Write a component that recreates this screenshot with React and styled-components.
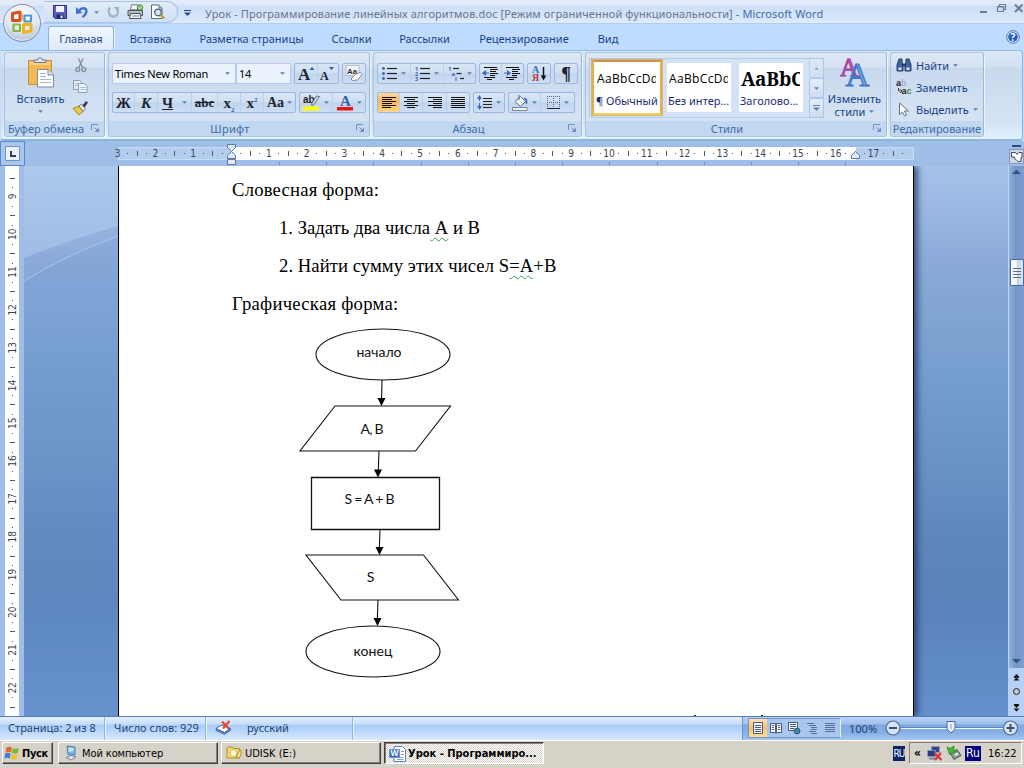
import React from 'react';
import styled, { createGlobalStyle, css } from 'styled-components';

const GlobalStyle = createGlobalStyle`
  * { box-sizing: border-box; }
  body {
    margin: 0;
    width: 1024px;
    height: 768px;
    overflow: hidden;
    background: #bfdbff;
    font-family: 'Noto Sans', 'Open Sans', sans-serif;
    font-size: 11px;
    color: #15428b;
  }
  svg { display: block; flex: none; }
`;

const Window = styled.div`
  position: relative;
  width: 1024px;
  height: 768px;
  display: flex;
  flex-direction: column;
  overflow: hidden;
  white-space: nowrap;
`;

/* ---------- title bar and tabs ---------- */

const TitleBar = styled.header`
  height: 24px;
  flex: none;
  display: flex;
  align-items: center;
  padding: 3px 1px 0 44px;
  background: linear-gradient(#e4ecf8 0, #dfe9f7 5px, #cddff6 6px, #d9e8fb 20px, #e2eefd 100%);
  border-bottom: 1px solid #b0cdf2;
`;

const QuickAccess = styled.div`
  width: 134px;
  height: 22px;
  margin-top: -2px;
  display: flex;
  align-items: center;
  padding-left: 9px;
  border: 1px solid #a9c4ea;
  border-left: none;
  border-radius: 0 12px 12px 0;
  background: linear-gradient(#e3edfa, #cfdff4);
`;

const QuickItem = styled.span`
  width: ${(p) => p.$w}px;
  padding-left: ${(p) => p.$pl || 0}px;
  display: flex;
  align-items: center;
`;

const TitleText = styled.div`
  flex: 1;
  font-size: 11px;
  letter-spacing: 0.11px;
  color: #69758c;
  span { color: #3e6aaa; }
`;

const Caption = styled.div`
  display: flex;
  align-self: flex-start;
`;

const TabBar = styled.nav`
  height: 26px;
  flex: none;
  display: flex;
  align-items: flex-end;
  padding-left: 48px;
  background: #bfdbff;
`;

const Tab = styled.div`
  width: ${(p) => p.$w}px;
  height: 24px;
  display: flex;
  align-items: center;
  justify-content: center;
  ${(p) => p.$active && css`
    background: linear-gradient(#f2f7fe, #dfeafa);
    border: 1px solid #8db2e3;
    border-bottom: none;
    border-radius: 3px 3px 0 0;
    box-shadow: 1px 0 0 #e9f2fe;
  `}
`;

const HelpSlot = styled.div`
  margin-left: auto;
  align-self: center;
  padding-right: 4px;
`;

const Orb = styled.div`
  position: absolute;
  left: 2px;
  top: 3px;
`;

/* ---------- ribbon ---------- */

const Ribbon = styled.section`
  height: 91px;
  flex: none;
  display: flex;
  gap: 3px;
  padding: 1px 4px 2px 3px;
  margin-right: 1px;
  background: linear-gradient(#dbe7f5 0, #d2e0f2 16px, #c8d9ed 17px, #d5e4f5 72px, #e2f1ff 100%);
  border: 1px solid #8db2e3;
  border-left-color: #c4dcfb;
  border-bottom: 2px solid #8db8de;
  border-radius: 0 4px 4px 4px;
  border-top-color: #94b8e6;
`;

const GroupBox = styled.div`
  width: ${(p) => p.$w}px;
  height: 85px;
  flex: none;
  display: flex;
  flex-direction: column;
  border: 1px solid #a9c5e3;
  border-right-color: #9ab9dc;
  border-radius: 3px;
  background: linear-gradient(#dee8f5 0, #d5e2f2 14px, #c9d9ed 15px, #d8e6f6 100%);
  box-shadow: 1px 1px 0 #ecf4fd;
`;

const GroupBody = styled.div`
  height: 68px;
  display: flex;
  flex-direction: ${(p) => (p.$row ? 'row' : 'column')};
  padding: ${(p) => p.$pad || '10px 3px 0'};
  gap: ${(p) => (p.$gap === undefined ? 8 : p.$gap)}px;
`;

const GroupLabel = styled.div`
  flex: 1;
  display: flex;
  align-items: center;
  justify-content: center;
  position: relative;
  padding-right: ${(p) => p.$pr || 0}px;
  background: #c1d8f0;
  border-radius: 0 0 3px 3px;
  color: #3e6aaa;
  letter-spacing: ${(p) => p.$ls || 0}px;
`;

const LauncherSlot = styled.div`
  position: absolute;
  right: 4px;
  top: 3px;
`;

const Row = styled.div`
  height: 21px;
  display: flex;
  gap: 3px;
`;

const ComboPair = styled.div`
  display: flex;
`;

const Combo = styled.div`
  width: ${(p) => p.$w}px;
  height: 21px;
  display: flex;
  align-items: center;
  justify-content: space-between;
  padding: 0 5px 0 2px;
  border: 1px solid #b4cae6;
  background: #eaf2fb;
  color: #000;
  letter-spacing: -0.2px;
`;

const ButtonGroup = styled.div`
  display: flex;
  height: 21px;
  border: 1px solid #9bb8dd;
  border-radius: 2px;
  background: linear-gradient(#d8e5f5 0, #cfdff2 9px, #c0d4ee 10px, #cddef3 100%);
`;

const Tool = styled.div`
  width: ${(p) => p.$w}px;
  height: 19px;
  display: flex;
  align-items: center;
  justify-content: center;
  gap: 3px;
  color: #1c2430;
  border-right: 1px solid #b9cfeb;
  &:last-child { border-right: none; }
  ${(p) => p.$on && css`
    background: linear-gradient(#fbd9a5, #fbb75b 45%, #fdd787);
  `}
`;

const Glyph = styled.span`
  font-family: 'Liberation Serif', serif;
  font-size: ${(p) => p.$size || 16}px;
  font-weight: bold;
  font-style: ${(p) => (p.$italic ? 'italic' : 'normal')};
  text-decoration: ${(p) => p.$line || 'none'};
  line-height: 18px;
  sup, sub { font-size: 7px; color: #2c56b0; line-height: 0; }
`;

const PasteButton = styled.div`
  width: 67px;
  display: flex;
  flex-direction: column;
  align-items: center;
  padding-top: 1px;
  padding-left: 4px;
  span { line-height: 15px; margin: 3px 0 4px; }
`;

const SmallStack = styled.div`
  display: flex;
  flex-direction: column;
  align-items: center;
  gap: 7px;
  padding-top: 2px;
`;

const Gallery = styled.div`
  display: flex;
  flex: none;
  width: 235px;
  height: 60px;
  border: 1px solid #b3cbe9;
  background: #d3e2f4;
`;

const StyleTile = styled.div`
  flex: none;
  width: ${(p) => (p.$on ? 72 : 64)}px;
  height: ${(p) => (p.$on ? 57 : 49)}px;
  margin: ${(p) => (p.$on ? '0 4px 0 1px' : '4px 8px 0 0')};
  background: #fff;
  border: ${(p) => (p.$on ? '3px solid #e8b043' : 'none')};
  border-top-color: #cf9247;
  border-bottom-color: #f3cf55;
  outline: ${(p) => (p.$on ? '1px solid #d7b27d' : 'none')};
  outline-offset: -1px;
  padding: ${(p) => (p.$on ? '8px 2px 0' : '7px 1px 0')};
  &:nth-child(3) { margin-right: 0; }
`;

const Sample = styled.div`
  width: 60px;
  height: 20px;
  overflow: hidden;
  line-height: 18px;
  font-family: ${(p) => (p.$heading ? "'Noto Serif', 'DejaVu Serif', serif" : "'Open Sans', sans-serif")};
  font-size: ${(p) => (p.$heading ? 19 : 12)}px;
  font-weight: ${(p) => (p.$heading ? 'bold' : 'normal')};
  letter-spacing: ${(p) => (p.$heading ? -0.2 : 0.35)}px;
  color: #000;
  padding-left: 1px;
`;

const TileName = styled.div`
  margin-top: 4px;
  line-height: 14px;
  color: #1b2c70;
`;

const GalleryScroll = styled.div`
  width: 15px;
  flex: none;
  margin: -1px -1px -1px auto;
  display: flex;
  flex-direction: column;
`;

const GalleryArrow = styled.div`
  flex: 1;
  display: flex;
  align-items: center;
  justify-content: center;
  border: 1px solid #aac4e4;
  border-radius: 2px;
  background: linear-gradient(#e3edf8, #cddef2);
  opacity: ${(p) => (p.$dim ? 0.6 : 1)};
`;

const ChangeStyles = styled.div`
  width: 61px;
  display: flex;
  flex-direction: column;
  align-items: center;
  line-height: 13px;
  svg + span { margin-top: 5px; }
  span { display: flex; align-items: center; gap: 4px; letter-spacing: 0.05px; }
`;

const EditLine = styled.div`
  height: 22px;
  display: flex;
  align-items: center;
  gap: 4px;
`;

/* ---------- workspace ---------- */

const RulerRow = styled.div`
  height: 25px;
  flex: none;
  display: flex;
  align-items: flex-start;
  background: #9ebde7;
`;

const TabSelector = styled.div`
  width: 25px;
  height: 25px;
  margin-right: 92px;
  display: flex;
  align-items: center;
  justify-content: center;
  border: 1px solid #5b87c9;
  background: #a9c6ec;
`;

const RulerToggle = styled.div`
  width: 16px;
  margin-left: auto;
  display: flex;
  flex-direction: column;
  align-items: center;
  gap: 2px;
  padding-top: 4px;
`;

const RulerSvg = styled.svg`
  overflow: visible;
  font-family: 'DejaVu Sans Condensed', 'DejaVu Sans', sans-serif;
  font-size: 10px;
  fill: #3a4454;
`;

const Workspace = styled.main`
  height: 550px;
  flex: none;
  display: flex;
`;

const SideRuler = styled.div`
  width: 24px;
  overflow: hidden;
  background: #a0bee6;
`;

const Canvas = styled.div`
  flex: 1;
  display: flex;
  position: relative;
  background: linear-gradient(#a5c2e9 0, #8aa9d9 100px, #779fcf 200px, #5f86bb 380px, #5a83bb 440px, #6590cd 550px);
`;

const Swoosh = styled.svg`
  width: 94px;
`;

const Page = styled.article`
  width: 796px;
  height: 550px;
  position: relative;
  background: #fff;
  border-left: 1px solid #000;
  border-right: 1px solid #000;
  box-shadow: 4px 0 6px rgba(30, 55, 100, 0.75);
  clip-path: inset(0 -14px 0 0);
  padding: 5px 0 0 113px;
  color: #000;
  overflow: hidden;
`;

/* tops of the letters that the page edge cuts off */
const Speck = styled.i`
  position: absolute;
  left: ${(p) => p.$x}px;
  bottom: 0;
  width: 2px;
  height: 1px;
  background: #222;
`;

const Line = styled.p`
  margin: 0;
  height: 38px;
  line-height: 38px;
  padding-left: ${(p) => (p.$indent ? 47 : 0)}px;
  font-family: 'Liberation Serif', serif;
  font-size: 18.67px;
  letter-spacing: ${(p) => p.$ls || 0}px;
`;

const Wavy = styled.span`
  text-decoration: underline wavy #3d9a4b 1px;
  text-underline-offset: 3px;
`;

const Flowchart = styled.svg`
  margin: -5px 0 0 60px;
  font-family: Lato, 'Open Sans', sans-serif;
  font-size: 14px;
`;

const ScrollBar = styled.aside`
  width: 16px;
  display: flex;
  flex-direction: column;
  align-items: center;
  border-left: 1px solid #b9d3f5;
  background: linear-gradient(90deg, #95b1dc, #7597c8 40%, #7c9dcd);
`;

const ScrollThumb = styled.div`
  width: 14px;
  height: 27px;
  margin: 83px 0 371px;
  display: flex;
  flex-direction: column;
  align-items: center;
  justify-content: center;
  gap: 2px;
  border: 1px solid #4b6a99;
  border-radius: 1px;
  background: linear-gradient(90deg, #f3f8fd 45%, #c5d4e5 50%, #dbe6f1);
  i { width: 8px; height: 1px; background: #5d6d83; }
`;

const BrowseButtons = styled.div`
  width: 15px;
  flex: 1;
  display: flex;
  justify-content: center;
  background: #b7d0f5;
`;

/* ---------- status bar ---------- */

const StatusBar = styled.footer`
  height: 24px;
  flex: none;
  display: flex;
  align-items: stretch;
  border-top: 1px solid #567db1;
  background: linear-gradient(#e3effe 0, #c9defb 7px, #a9ccf8 8px, #bcd8fb 15px, #d9e9fd 100%);
  color: #1f3e77;
`;

const StatusCell = styled.div`
  width: ${(p) => p.$w}px;
  padding: 0 0 2px ${(p) => p.$pl || 9}px;
  display: flex;
  align-items: center;
  gap: 15px;
  border-right: 1px solid #93b4dd;
  box-shadow: 1px 0 0 #e8f2ff;
`;

const StatusRight = styled.div`
  width: 282px;
  margin-left: auto;
  padding: 0 0 1px 5px;
  display: flex;
  align-items: center;
  border-left: 1px solid #6f94c6;
  background: linear-gradient(#b9d3f5 0, #9fc1ee 7px, #7fa9e0 8px, #86b0e6 16px, #a5c8f2 100%);
`;

const ViewButtons = styled.div`
  display: flex;
  width: 93px;
  height: 20px;
  border: 1px solid #7296c9;
  border-right-color: #e5f0ff;
  background: #a9c7ee;
`;

const ViewButton = styled.div`
  width: 18px;
  height: 18px;
  display: flex;
  align-items: center;
  justify-content: center;
  background: ${(p) => (p.$on ? 'linear-gradient(#fde3b5, #fcbf62 50%, #fde093)' : 'transparent')};
`;

const ZoomText = styled.span`
  width: 29px;
  margin: 0 6px 0 8px;
`;

/* ---------- XP taskbar ---------- */

const TaskBar = styled.div`
  height: 28px;
  flex: none;
  display: flex;
  align-items: flex-start;
  padding: 1px 2px 0;
  border-top: 1px solid #fff;
  background: #d6d2c8;
  color: #000;
  font-family: 'DejaVu Sans Condensed', 'DejaVu Sans', sans-serif;
  font-size: 11px;
`;

const raised = css`
  border: 1px solid;
  border-color: #fff #404040 #404040 #fff;
  box-shadow: inset -1px -1px 0 #858179;
`;

const StartButton = styled.div`
  ${raised}
  width: 51px;
  height: 22px;
  margin-right: 5px;
  display: flex;
  align-items: center;
  gap: 1px;
  padding-left: 1px;
  font-weight: bold;
  letter-spacing: -0.4px;
`;

const TaskButton = styled.div`
  ${raised}
  width: 160px;
  height: 22px;
  margin-right: 3px;
  display: flex;
  align-items: center;
  gap: 3px;
  padding-left: 4px;
  letter-spacing: ${(p) => p.$ls || 0}px;
  ${(p) => p.$active && css`
    border-color: #404040 #fff #fff #404040;
    box-shadow: inset 1px 1px 0 #858179;
    background: repeating-conic-gradient(#fff 0 25%, #d6d2c8 0 50%) 0 0 / 2px 2px;
    font-weight: bold;
    padding: 1px 0 0 4px;
    gap: 2px;
  `}
`;

const LangBox = styled.div`
  width: ${(p) => p.$w}px;
  height: 15px;
  line-height: 15px;
  text-align: center;
  letter-spacing: ${(p) => p.$ls || 0}px;
  overflow: hidden;
  background: ${(p) => p.$bg};
  color: #fff;
  font-size: ${(p) => p.$size || 11}px;
`;

const TrayArea = styled.div`
  margin-left: auto;
  height: 22px;
  display: flex;
  align-items: center;
  gap: 4px;
`;

const Tray = styled.div`
  width: 113px;
  height: 22px;
  display: flex;
  align-items: center;
  gap: 3px;
  padding-left: 4px;
  border: 1px solid;
  border-color: #858179 #fff #fff #858179;
  time { margin-left: 4px; }
  b { width: 9px; font-size: 12px; }
`;

/* ---------- icons ---------- */

const Arrow = ({ w = 5, color = '#5f7fae', up }) => (
  <svg width={w} height="3" viewBox="0 0 6 3">
    <path d={up ? 'M0 3h6L3 0z' : 'M0 0h6L3 3z'} fill={color} />
  </svg>
);

/* arrow with a bar over it: "more" buttons */
const BarArrow = ({ color = '#5f7fae' }) => (
  <svg width="7" height="6" viewBox="0 0 7 6">
    <path d="M0 .5h7" stroke={color} />
    <path d="M0 2.500h7L3.500 6z" fill={color} />
  </svg>
);

const OfficeOrb = () => (
  <svg width="40" height="40" viewBox="0 0 40 40">
    <defs>
      <radialGradient id="orb" cx="50%" cy="30%" r="70%">
        <stop offset="0" stopColor="#fff" />
        <stop offset="0.6" stopColor="#e1e8f2" />
        <stop offset="1" stopColor="#aebfd6" />
      </radialGradient>
    </defs>
    <circle cx="20" cy="20" r="18.500" fill="url(#orb)" stroke="#7c91b0" />
    <circle cx="20" cy="20" r="17.200" fill="none" stroke="#f7faff" strokeOpacity=".8" />
    <g fill="none" strokeLinejoin="round">
      <path d="M10.500 10.500l7.500-1.500v8.500h-7.500z" stroke="#d4501c" strokeWidth="3" />
      <path d="M22.500 12.500h6.500v6h-6.500z" stroke="#4a9bd8" strokeWidth="2.200" />
      <path d="M11.500 21.500h6.500v6.500h-6.500z" stroke="#85b643" strokeWidth="2.200" />
      <path d="M21.500 21.500h7.500v6.500l-7.500 1.500z" stroke="#efb31d" strokeWidth="3" />
    </g>
    <path d="M18 8.500l2.500 2.500v6" stroke="#f09a56" strokeWidth="1" fill="none" />
  </svg>
);

const SaveIcon = () => (
  <svg width="14" height="14" viewBox="0 0 14 14">
    <path d="M.5.5h13v13H2l-1.500-1.500z" fill="#5a5fc4" stroke="#2d2f8c" />
    <path d="M3 1h8v6H3z" fill="#eef3fc" />
    <path d="M3.500 9.500h7V13h-7z" fill="#27285f" />
    <path d="M7.500 10.500h2V13h-2z" fill="#f1f4ff" />
  </svg>
);

const UndoIcon = () => (
  <svg width="14" height="14" viewBox="0 0 14 14">
    <path d="M4 5.500C6.500 2.500 10.500 2.500 11.300 5.200c.6 2.300-1 4.600-3.800 7" fill="none" stroke="#3c6fd0" strokeWidth="2.400" />
    <path d="M1 2v7l6.500-1z" fill="#3c6fd0" />
  </svg>
);

const RedoIcon = () => (
  <svg width="13" height="14" viewBox="0 0 13 14">
    <path d="M3 2.500C.5 6 2 11.500 6.500 11.500c4 0 5.500-4.500 3.500-7.500" fill="none" stroke="#a4b3cc" strokeWidth="2.400" />
    <path d="M6.500 2h5.500v5.500z" fill="#a4b3cc" />
  </svg>
);

const PrintIcon = () => (
  <svg width="17" height="16" viewBox="0 0 17 16">
    <path d="M4.500.8h6l1 5h-8z" fill="#fff" stroke="#6d7788" />
    <path d="M1 6.500h14.500v5H1z" fill="#b6bdc8" stroke="#4b5362" />
    <path d="M3.500 9.500h9.500l1 5H2.500z" fill="#f7f7fa" stroke="#4b5362" />
    <path d="M5 12h7" stroke="#777" />
    <circle cx="13" cy="3.500" r="2.800" fill="#7cc05c" stroke="#3c7a25" strokeWidth=".7" />
    <path d="M11.500 3.500l1.200 1.200 2-2.200" stroke="#fff" fill="none" />
  </svg>
);

const PreviewIcon = () => (
  <svg width="16" height="16" viewBox="0 0 16 16">
    <path d="M1.500 1h7.500l3 3v10.500H1.500z" fill="#fff" stroke="#5b687d" />
    <path d="M9 1v3h3" fill="#dbe4f2" stroke="#5b687d" />
    <circle cx="8" cy="8.500" r="3.300" fill="#cfe4f6" stroke="#4d5a6e" strokeWidth="1.200" />
    <path d="M10.500 11l4 3.500" stroke="#c49a32" strokeWidth="2.200" />
  </svg>
);

const CaptionIcons = () => (
  <svg width="44" height="12" viewBox="0 0 44 12" stroke="#6b7f9d" fill="none">
    <path d="M1 9h7" strokeWidth="2" />
    <path d="M20.500 3V1.500h6v5H25M18.500 3.500h6v5h-6zM18.500 4h6" strokeWidth="1.200" />
    <path d="M36 1.500l7.500 7.500M43.500 1.500L36 9" strokeWidth="2" />
  </svg>
);

const HelpIcon = () => (
  <svg width="14" height="14" viewBox="0 0 14 14">
    <circle cx="7" cy="7" r="6.300" fill="#e9f2ff" stroke="#4570b5" />
    <circle cx="7" cy="7" r="4.800" fill="#2261c9" />
    <text x="7" y="10.600" textAnchor="middle" fontSize="10" fontWeight="bold" fill="#fff">?</text>
  </svg>
);

const PasteIcon = () => (
  <svg width="28" height="31" viewBox="0 0 28 31">
    <path d="M1.500 3.500h23v24h-23z" fill="#f3b957" stroke="#cb8d2e" />
    <path d="M3 5h20v3H3z" fill="#f9cf85" />
    <path d="M7 5.500V3h3.500c0-3 5-3 5 0H19v2.500z" fill="#dfe3e8" stroke="#6c7686" />
    <path d="M10.500 12.500h10.500l5.500 5.500v12H10.500z" fill="#fff" stroke="#7a8aa5" />
    <path d="M21 12.500V18h5.500" fill="#dce6f4" stroke="#7a8aa5" />
    <path d="M13 16.500h6M13 19.500h6M13 22.500h11M13 25.500h11" stroke="#a8b6cc" />
  </svg>
);

const CutIcon = () => (
  <svg width="12" height="15" viewBox="0 0 12 15" fill="none" stroke="#8693a8" strokeWidth="1.500">
    <path d="M3.500.5l4 9M8 .5l-4 9" />
    <circle cx="2.800" cy="11.500" r="1.900" />
    <circle cx="8.800" cy="11.500" r="1.900" />
  </svg>
);

const CopyIcon = () => (
  <svg width="15" height="13" viewBox="0 0 15 13">
    <path d="M.5.5h6l2 2v7h-8z" fill="#e7eef8" stroke="#8d9cb5" />
    <path d="M5.500 3.500h6l2.500 2.500v6.500H5.500z" fill="#eef4fc" stroke="#8d9cb5" />
    <path d="M2 3.500h4M2 5.500h3M7.500 7.500h5M7.500 9.500h5" stroke="#a9b6ca" />
  </svg>
);

const BrushIcon = () => (
  <svg width="17" height="16" viewBox="0 0 17 16">
    <path d="M1 8.500l6-2.500 4 5.500-4 3.500z" fill="#e9c94a" stroke="#ac8a1e" />
    <path d="M7 6l2.500-2 4 5-2.500 2.500z" fill="#e6e6e6" stroke="#666" strokeWidth=".8" />
    <path d="M10.500 5.500L14 1l2 1.500-3.500 5z" fill="#3a2f5e" />
  </svg>
);

const Launcher = () => (
  <LauncherSlot>
    <svg width="9" height="9" viewBox="0 0 9 9" fill="none" stroke="#6d8fbf">
      <path d="M.5 6V.5H7M3.500 3.500l3 3" />
      <path d="M8 3.500V8H3.500z" fill="#6d8fbf" stroke="none" />
    </svg>
  </LauncherSlot>
);

const GrowFont = ({ shrink }) => (
  <svg width="17" height="17" viewBox="0 0 17 17">
    <text x="0" y="15" fontFamily="Liberation Serif" fontWeight="bold" fontSize={shrink ? 12 : 17} fill="#1c2430">A</text>
    <path d={shrink ? 'M9 2h5l-2.500 3z' : 'M11.500 5h5L14 2z'} fill="#2d5aa8" />
  </svg>
);

const ClearFormat = () => (
  <svg width="19" height="17" viewBox="0 0 19 17">
    <rect x="1" y=".5" width="13" height="10" fill="#f3f6fb" stroke="#93a4bd" strokeWidth=".6" />
    <text x="2" y="8.500" fontFamily="Liberation Sans" fontWeight="bold" fontSize="8" fill="#333">Aa</text>
    <path d="M6 14l4.500-5 5-1.500 1.500 2-4.500 5.500-5 .5z" fill="#fff" stroke="#77869d" />
  </svg>
);

const Highlighter = () => (
  <svg width="18" height="17" viewBox="0 0 18 17">
    <text x="0" y="9" fontFamily="Liberation Sans" fontSize="10" fontWeight="bold" fill="#222">ab</text>
    <path d="M8.500 10l5-8 3 .5L12 9.500l-3 2z" fill="#ccd5e1" stroke="#59677d" strokeWidth=".9" />
    <path d="M0 12.500h16v4H0z" fill="#ffff00" />
  </svg>
);

const FontColor = () => (
  <svg width="17" height="17" viewBox="0 0 17 17">
    <text x="3" y="11.500" fontFamily="Liberation Serif" fontSize="15" fontWeight="bold" fill="#3060a6">A</text>
    <path d="M0 13h16v3.500H0z" fill="#ee1111" />
  </svg>
);

const ListIcon = ({ kind }) => (
  <svg width="16" height="15" viewBox="0 0 16 15">
    {[2.5, 7.5, 12.5].map((y, i) => (
      <g key={y}>
        {kind === 'bullet' && <circle cx="1.500" cy={y} r="1.400" fill="#3c62b0" />}
        {kind === 'number' && <text x="0" y={y + 2} fontSize="5.500" fontWeight="bold" fill="#3c62b0">{i + 1}</text>}
        {kind === 'level' && <text x={i * 3.5} y={y + 2} fontSize="6" fontWeight="bold" fill="#3c62b0">{'1ai'[i]}</text>}
        <path
          d={kind === 'level' ? `M${5 + i * 3.5} ${y}H${11 + i * 2.5}` : `M5 ${y}H15`}
          stroke="#222"
          strokeWidth="1.200"
        />
      </g>
    ))}
  </svg>
);

const IndentIcon = ({ right }) => (
  <svg width="17" height="15" viewBox="0 0 17 15">
    <path d="M2 1.500h13M8 3.500h8M8 5.500h6M8 7.500h8M8 9.500h5M2 11.500h11M5 13.500h5" stroke="#111" strokeWidth="1.100" />
    <path d={right ? 'M0 6.500h3V4l4 3-4 3V7.500H0z' : 'M7 6.500H4V4L0 7l4 3V7.500h3z'} fill="#3867b8" />
  </svg>
);

const SortIcon = () => (
  <svg width="15" height="17" viewBox="0 0 15 17">
    <text x="0" y="8" fontFamily="Liberation Serif" fontSize="10" fontWeight="bold" fill="#3867b8">А</text>
    <text x="0" y="16" fontFamily="Liberation Serif" fontSize="10" fontWeight="bold" fill="#c23b3b">Я</text>
    <path d="M11.500 2v10" stroke="#111" strokeWidth="1.500" />
    <path d="M8.800 10.500h5.400l-2.700 5z" fill="#111" />
  </svg>
);

const alignPaths = {
  left: 'M0 1.500h14M0 3.500h10M0 5.500h14M0 7.500h10M0 9.500h14M0 11.500h9',
  center: 'M0 1.500h14M3 3.500h8M0 5.500h14M3 7.500h8M0 9.500h14M3 11.500h8',
  right: 'M0 1.500h14M5 3.500h9M0 5.500h14M5 7.500h9M0 9.500h14M5 11.500h9',
  full: 'M0 1.500h14M0 3.500h14M0 5.500h14M0 7.500h14M0 9.500h14M0 11.500h14',
};

const AlignIcon = ({ kind }) => (
  <svg width="14" height="13" viewBox="0 0 14 13">
    <path d={alignPaths[kind]} stroke="#111" strokeWidth="1" />
  </svg>
);

const SpacingIcon = () => (
  <svg width="16" height="17" viewBox="0 0 16 17">
    <path d="M6 4.500h9M6 7.500h9M6 10.500h9M6 13.500h9" stroke="#222" />
    <path d="M2.500 4v9" stroke="#3867b8" strokeDasharray="3 2" />
    <path d="M0 5h5L2.500 1zM0 12h5l-2.500 4z" fill="#3867b8" />
  </svg>
);

const BucketIcon = () => (
  <svg width="17" height="17" viewBox="0 0 17 17">
    <path d="M3 7.500l5.500-5 5 5-5 5z" fill="#f4f7fb" stroke="#55647c" />
    <path d="M7 1v5" stroke="#55647c" />
    <path d="M11.500 3.500c4 0 4.500 3 3.500 7-1.500-1-2.200-2.500-1.500-4z" fill="#3c70c4" />
    <path d="M.5 13.500h14.500v3H.5z" fill="#f3f3f3" stroke="#77869d" />
  </svg>
);

const BordersIcon = () => (
  <svg width="15" height="15" viewBox="0 0 15 15">
    <path d="M1 1.500h13M1.500 1v12M7.500 1v12M13.500 1v12M1 7.500h13" stroke="#55647c" strokeDasharray="1 1" fill="none" />
    <path d="M1 13.500h13" stroke="#222" />
  </svg>
);

const StylesIcon = () => (
  <svg width="30" height="29" viewBox="0 0 30 29" fontFamily="Liberation Serif">
    <text x="0" y="17.500" fontSize="25" fill="#c25abb" stroke="#a3409c" strokeWidth="1">A</text>
    <text x="5.500" y="27.500" fontSize="33" fill="#6f9fe2" stroke="#3e72c4" strokeWidth="1.100">A</text>
  </svg>
);

const FindIcon = () => (
  <svg width="16" height="14" viewBox="0 0 16 14">
    <path d="M3 1h3v3l1 3v6H1V7zM10 1h3l2 6v6H9V7l1-3z" fill="#41639f" stroke="#25406f" />
    <path d="M6 5.500h4v3H6z" fill="#25406f" />
    <path d="M2.500 9.500h3v2.500h-3zM10.500 9.500h3v2.500h-3z" fill="#dce8f8" />
  </svg>
);

const ReplaceIcon = () => (
  <svg width="16" height="16" viewBox="0 0 16 16" fontFamily="Liberation Sans" fontWeight="bold" fontSize="9">
    <text x="0" y="7" fill="#222">a<tspan fill="#b0a9b8">b</tspan></text>
    <text x="5.500" y="14.500" fill="#222">a<tspan fill="#3f8f36">c</tspan></text>
    <path d="M2.500 9v3h2M4 10l2 2-2 2" fill="none" stroke="#333" strokeWidth=".9" />
  </svg>
);

const SelectIcon = () => (
  <svg width="16" height="15" viewBox="0 0 16 15">
    <path d="M3.500 1v11.500l3-2.500 2 4 2-1-2-4h4z" fill="#fff" stroke="#66738a" />
  </svg>
);

const ProofIcon = () => (
  <svg width="17" height="15" viewBox="0 0 17 15">
    <path d="M1 8.500l6-3.500 8.500 3.500-6 4z" fill="#fff" stroke="#4f6da3" />
    <path d="M1 8.500v2l8.500 4 6-4v-2l-6 4z" fill="#5f86c9" stroke="#3a5a96" strokeWidth=".6" />
    <path d="M7 1.500l7 7.500M14.500 1L8 8.500" stroke="#e2432a" strokeWidth="2" />
  </svg>
);

const viewPaths = [
  'M2.500 1.500h9v11h-9zM4 4.500h6M4 6.500h6M4 8.500h6M4 10.500h6',
  'M1.500 2.500h5v9h-5zM7.500 2.500h5v9h-5zM3 4.500h2M3 6.500h2M3 8.500h2M9 4.500h2M9 6.500h2M9 8.500h2M6.500 12.500h1',
  'M1.500 1.500h9v8h-9zM3 3.500h6M3 5.500h6M3 7.500h4',
  'M2 2.500h7M4 4.500h7M6 6.500h6M6 8.500h6M4 10.500h7M6 12.500h6',
  'M2 2.500h10M2 4.500h10M2 6.500h10M2 8.500h10M2 10.500h10',
];

const ViewIcon = ({ index }) => (
  <svg width="14" height="14" viewBox="0 0 14 14">
    <path d={viewPaths[index]} fill={index < 3 ? '#f4f8fe' : 'none'} stroke={index < 3 ? '#4a5c7a' : '#587099'} />
    {index === 2 && <circle cx="10" cy="10" r="3" fill="#3f86a8" stroke="#2f5f80" />}
  </svg>
);

const ZoomSlider = () => (
  <svg width="136" height="20" viewBox="0 0 136 20">
    <path d="M17 10.500h102" stroke="#f0f6ff" />
    <path d="M17 9.500h102" stroke="#5e83b8" />
    {[9, 126.5].map((cx) => (
      <circle key={cx} cx={cx} cy="10" r="7" fill="#d3e3f8" stroke="#4d6a95" strokeWidth="1.200" />
    ))}
    <path d="M5 10h8M122.500 10h8M126.500 6v8" stroke="#3e506e" strokeWidth="2" />
    <path d="M63 3.500h8v7.500l-4 4-4-4z" fill="#e7f0fb" stroke="#4d6a95" />
    <path d="M67 6v5" stroke="#8fa5c5" />
  </svg>
);

const FlagIcon = () => (
  <svg width="17" height="16" viewBox="0 0 17 16">
    <path d="M2.500 2.500c2-1.200 3.500-1 5.300 0L7 7.500C5 6.500 3.500 6.500 1.500 7.500z" fill="#e8632b" />
    <path d="M8.800 3c2 1.200 4 1 6 0l-1 5c-2 1-4 1-6 0z" fill="#7cb93a" />
    <path d="M1.300 8.500c2-1.200 3.500-1 5.300 0l-1 5c-2-1.200-3.500-1-5.300 0z" fill="#3f7be0" />
    <path d="M7.600 9c2 1.200 4 1 6 0l-1 5c-2 1-4 1-6 0z" fill="#f3c02d" />
  </svg>
);

const ComputerIcon = () => (
  <svg width="16" height="16" viewBox="0 0 16 16">
    <path d="M4 1l8 1v8l-7-.5z" fill="#72b9f0" stroke="#5877a8" />
    <path d="M5.500 2.500l5 .5v3l-5 1z" fill="#c5e6ff" />
    <path d="M3 12.500l5-2 5 1.500-5 3z" fill="#dce2ec" stroke="#7c8798" />
  </svg>
);

const FolderIcon = () => (
  <svg width="16" height="16" viewBox="0 0 16 16">
    <path d="M1 3.500l1-1.500h4l1.500 1.500h6V13H1z" fill="#f5d76d" stroke="#b28f25" />
    <circle cx="7.500" cy="8" r="3.500" fill="#fdf8dc" stroke="#d4bf66" />
    <path d="M10 13l3.500-8H15v5l-2 3z" fill="#f9e691" stroke="#b28f25" />
  </svg>
);

const WordIcon = () => (
  <svg width="17" height="16" viewBox="0 0 17 16">
    <path d="M5 .5h8.500l3 3v12H5z" fill="#fff" stroke="#5b83c4" />
    <path d="M8 11.500h6.500M8 13.500h6.500M12 5.500h3M12 8.500h3" stroke="#7ea0d6" />
    <path d="M.5 3.500h10v8H.5z" fill="#3a67b8" stroke="#6b93d6" />
    <text x="5.500" y="10.300" textAnchor="middle" fontFamily="Liberation Sans" fontSize="8.500" fontWeight="bold" fill="#fff">W</text>
  </svg>
);

const NetworkIcon = () => (
  <svg width="17" height="16" viewBox="0 0 17 16">
    <path d="M5.500 1.500h8v6h-8z" fill="#34468e" stroke="#8d97ba" />
    <path d="M1.500 5.500h8v6h-8z" fill="#293a80" stroke="#8d97ba" />
    <path d="M3 13.500h6" stroke="#777f9a" strokeWidth="2" />
    <path d="M8.500 8l7 7M15 8l-6 7" stroke="#dc3540" strokeWidth="2.400" />
  </svg>
);

const SafeRemoveIcon = () => (
  <svg width="16" height="16" viewBox="0 0 16 16">
    <path d="M4 8l7-3.500 4 6L8 14.500z" fill="#8f9a91" stroke="#4e574f" />
    <path d="M9 10l3-1.500" stroke="#e7efe8" strokeWidth="2" />
    <path d="M1 2l3 1.500L8 1v3.500l2 2-6.500 3z" fill="#42b53a" stroke="#23791d" strokeWidth=".7" />
  </svg>
);

/* ---------- rulers ---------- */

const CM = 37.8;

const HorizontalRuler = () => {
  const marks = [];
  for (let q = -12; q <= 71; q += 1) {
    const x = 114 + (q * CM) / 4;
    if (q === 0) continue;
    if (q % 4 === 0) {
      marks.push(<text key={q} x={x} y="16" textAnchor="middle">{Math.abs(q / 4)}</text>);
    } else if (q % 2 === 0) {
      marks.push(<path key={q} d={`M${Math.round(x) + 0.5} 10v5`} stroke="#4c596e" />);
    } else {
      marks.push(<path key={q} d={`M${Math.round(x)} 12.500h1`} stroke="#4c596e" />);
    }
  }
  return (
    <RulerSvg width="804" height="25" viewBox="0 0 804 25">
      <rect x="1.500" y="6.500" width="795" height="12" fill="#b3cdf0" stroke="#c7dcf7" />
      <rect x="115" y="6" width="624" height="13" fill="#fff" />
      {marks}
      {Array.from({ length: 13 }, (_, i) => (
        <path key={i} d={`M${Math.round(162 + i * 47.2) + 0.5} 21v3`} stroke="#6f8cb5" />
      ))}
      <g fill="#dfeafa" stroke="#5f789f">
        <path d="M110.500 3.500h8v3l-4 4-4-4z" />
        <path d="M110.500 17.500v-3l4-4 4 4v3z" />
        <path d="M110.500 18.500h8v5h-8z" />
        <path d="M734.500 17.500v-3l4-4 4 4v3z" />
      </g>
    </RulerSvg>
  );
};

const VerticalRuler = () => {
  const marks = [];
  for (let q = -2; q <= 54; q += 1) {
    const y = 30.5 + (q * CM) / 4;
    if (q % 4 === 0) {
      marks.push(
        <text key={q} transform={`translate(16 ${y}) rotate(-90)`} textAnchor="middle">{9 + q / 4}</text>
      );
    } else if (q % 2 === 0) {
      marks.push(<path key={q} d={`M10 ${Math.round(y) + 0.5}h5`} stroke="#4c596e" />);
    } else {
      marks.push(<path key={q} d={`M12 ${Math.round(y) + 0.5}h1`} stroke="#4c596e" />);
    }
  }
  return (
    <RulerSvg width="24" height="550" viewBox="0 0 24 550">
      <rect x="5" width="14" height="550" fill="#fff" />
      {marks}
    </RulerSvg>
  );
};

/* ---------- sections ---------- */

const tabs = [
  { name: 'Главная', w: 66, active: true },
  { name: 'Вставка', w: 73 },
  { name: 'Разметка страницы', w: 129 },
  { name: 'Ссылки', w: 71 },
  { name: 'Рассылки', w: 75 },
  { name: 'Рецензирование', w: 124 },
  { name: 'Вид', w: 44 },
];

const Header = () => (
  <>
    <TitleBar>
      <QuickAccess>
        <QuickItem $w={22}><SaveIcon /></QuickItem>
        <QuickItem $w={19}><UndoIcon /></QuickItem>
        <QuickItem $w={13}><Arrow /></QuickItem>
        <QuickItem $w={20}><RedoIcon /></QuickItem>
        <QuickItem $w={23}><PrintIcon /></QuickItem>
        <PreviewIcon />
      </QuickAccess>
      <QuickItem $w={27} $pl={6}><BarArrow color="#244a86" /></QuickItem>
      <TitleText>
        Урок - Программирование линейных алгоритмов.doc [Режим ограниченной функциональности] <span>- Microsoft Word</span>
      </TitleText>
      <Caption><CaptionIcons /></Caption>
    </TitleBar>
    <TabBar>
      {tabs.map((t) => (
        <Tab key={t.name} $w={t.w} $active={t.active}>{t.name}</Tab>
      ))}
      <HelpSlot><HelpIcon /></HelpSlot>
    </TabBar>
  </>
);

const ClipboardGroup = () => (
  <GroupBox $w={101}>
    <GroupBody $row $pad="3px 3px 0 0" $gap={0}>
      <PasteButton>
        <PasteIcon />
        <span>Вставить</span>
        <Arrow />
      </PasteButton>
      <SmallStack>
        <CutIcon />
        <CopyIcon />
        <BrushIcon />
      </SmallStack>
    </GroupBody>
    <GroupLabel $pr={17}>Буфер обмена<Launcher /></GroupLabel>
  </GroupBox>
);

const FontGroup = () => (
  <GroupBox $w={262}>
    <GroupBody>
      <Row>
        <ComboPair>
          <Combo $w={124}>Times New Roman<Arrow /></Combo>
          <Combo $w={55}>14<Arrow /></Combo>
        </ComboPair>
        <ButtonGroup>
          <Tool $w={23}><GrowFont /></Tool>
          <Tool $w={20}><GrowFont shrink /></Tool>
        </ButtonGroup>
        <ButtonGroup><Tool $w={22}><ClearFormat /></Tool></ButtonGroup>
      </Row>
      <Row>
        <ButtonGroup>
          <Tool $w={22}><Glyph $size={15}>Ж</Glyph></Tool>
          <Tool $w={23}><Glyph $italic $size={15}>К</Glyph></Tool>
          <Tool $w={34}><Glyph $line="underline" $size={15}>Ч</Glyph>&nbsp;<Arrow /></Tool>
          <Tool $w={26}><Glyph $line="line-through" $size={13}>abc</Glyph></Tool>
          <Tool $w={23}><Glyph $size={15}>x<sub>2</sub></Glyph></Tool>
          <Tool $w={23}><Glyph $size={15}>x<sup>2</sup></Glyph></Tool>
          <Tool $w={31}><Glyph $size={14}>Aa</Glyph><Arrow /></Tool>
        </ButtonGroup>
        <ButtonGroup>
          <Tool $w={33}><Highlighter /><Arrow /></Tool>
          <Tool $w={32}><FontColor /><Arrow /></Tool>
        </ButtonGroup>
      </Row>
    </GroupBody>
    <GroupLabel $pr={18} $ls={0.3}>Шрифт<Launcher /></GroupLabel>
  </GroupBox>
);

const ParagraphGroup = () => (
  <GroupBox $w={209}>
    <GroupBody>
      <Row>
        <ButtonGroup>
          <Tool $w={33}><ListIcon kind="bullet" /><Arrow /></Tool>
          <Tool $w={33}><ListIcon kind="number" /><Arrow /></Tool>
          <Tool $w={31}><ListIcon kind="level" /><Arrow /></Tool>
        </ButtonGroup>
        <ButtonGroup>
          <Tool $w={22}><IndentIcon /></Tool>
          <Tool $w={21}><IndentIcon right /></Tool>
        </ButtonGroup>
        <ButtonGroup><Tool $w={22}><SortIcon /></Tool></ButtonGroup>
        <ButtonGroup><Tool $w={22}><Glyph $size={18}>¶</Glyph></Tool></ButtonGroup>
      </Row>
      <Row>
        <ButtonGroup>
          <Tool $w={22} $on><AlignIcon kind="left" /></Tool>
          <Tool $w={23}><AlignIcon kind="center" /></Tool>
          <Tool $w={24}><AlignIcon kind="right" /></Tool>
          <Tool $w={22}><AlignIcon kind="full" /></Tool>
        </ButtonGroup>
        <ButtonGroup><Tool $w={30}><SpacingIcon /><Arrow /></Tool></ButtonGroup>
        <ButtonGroup>
          <Tool $w={32}><BucketIcon /><Arrow /></Tool>
          <Tool $w={33}><BordersIcon /><Arrow /></Tool>
        </ButtonGroup>
      </Row>
    </GroupBody>
    <GroupLabel $pr={18}>Абзац<Launcher /></GroupLabel>
  </GroupBox>
);

const StylesGroup = () => (
  <GroupBox $w={302}>
    <GroupBody $row $pad="5px 0 0 3px" $gap={0}>
      <Gallery>
        <StyleTile $on>
          <Sample>AaBbCcDd</Sample>
          <TileName>¶ Обычный</TileName>
        </StyleTile>
        <StyleTile>
          <Sample>AaBbCcDd</Sample>
          <TileName>Без интер...</TileName>
        </StyleTile>
        <StyleTile>
          <Sample $heading>AaBbCc</Sample>
          <TileName>Заголово...</TileName>
        </StyleTile>
        <GalleryScroll>
          <GalleryArrow $dim><Arrow up /></GalleryArrow>
          <GalleryArrow><Arrow /></GalleryArrow>
          <GalleryArrow><BarArrow /></GalleryArrow>
        </GalleryScroll>
      </Gallery>
      <ChangeStyles>
        <StylesIcon />
        <span>Изменить</span>
        <span>стили <Arrow /></span>
      </ChangeStyles>
    </GroupBody>
    <GroupLabel $pr={18}>Стили<Launcher /></GroupLabel>
  </GroupBox>
);

const EditingGroup = () => (
  <GroupBox $w={94}>
    <GroupBody $pad="1px 0 0 5px" $gap={0}>
      <EditLine><FindIcon />Найти <Arrow /></EditLine>
      <EditLine><ReplaceIcon />Заменить</EditLine>
      <EditLine><SelectIcon />Выделить <Arrow /></EditLine>
    </GroupBody>
    <GroupLabel>Редактирование</GroupLabel>
  </GroupBox>
);

const FlowDiagram = () => (
  <Flowchart width="180" height="360" viewBox="0 0 180 360" fill="none" stroke="#111" strokeWidth="1.100">
    <ellipse cx="91" cy="36.500" rx="67" ry="25.500" />
    <path d="M43 88h115.500l-35 45H8z" />
    <path d="M19.500 159.500h128v52h-128z" strokeWidth="1.300" />
    <path d="M14 237h117.500l35 45H49z" />
    <ellipse cx="81" cy="333.500" rx="67" ry="25.500" />
    <path d="M90 62l-.5 20M87 133l-.7 19M88 211.500l-.7 20M86 282l-.7 20" />
    <g fill="#000" stroke="none">
      <path d="M85.500 80h8l-4 8z" />
      <path d="M82 151.500h8l-4 8z" />
      <path d="M83.500 229h8l-4 8z" />
      <path d="M81.500 300h8l-4 8z" />
    </g>
    <g fill="#111" stroke="none" textAnchor="middle">
      <text x="87" y="39" textLength="45">начало</text>
      <text x="80" y="116" textLength="23">A, B</text>
      <text x="77.500" y="186" textLength="50">S = A + B</text>
      <text x="78.500" y="264">S</text>
      <text x="81" y="338" textLength="39">конец</text>
    </g>
  </Flowchart>
);

const App = () => (
  <Window>
    <GlobalStyle />
    <Header />
    <Ribbon>
      <ClipboardGroup />
      <FontGroup />
      <ParagraphGroup />
      <StylesGroup />
      <EditingGroup />
    </Ribbon>

    <RulerRow>
      <TabSelector>
        <svg width="15" height="15" viewBox="0 0 15 15">
          <rect x=".5" y=".5" width="14" height="14" fill="#e9f1fb" stroke="#6f93c7" />
          <path d="M6 5v5h5" fill="none" stroke="#333f55" strokeWidth="2" />
        </svg>
      </TabSelector>
      <HorizontalRuler />
      <RulerToggle>
        <svg width="9" height="2"><path d="M0 1h9" stroke="#2c4a7d" strokeWidth="2" /></svg>
        <svg width="15" height="15" viewBox="0 0 15 15">
          <rect x=".5" y=".5" width="14" height="14" fill="#cdd6e3" stroke="#8698b5" />
          <path d="M2.500 3.500h4l1.500 2 2-2h3v5h-1v4h-3l-2-2-1.500-1v-1.500h-3z" fill="#fff" stroke="#39465c" />
        </svg>
      </RulerToggle>
    </RulerRow>

    <Workspace>
      <SideRuler><VerticalRuler /></SideRuler>
      <Canvas>
        <Swoosh viewBox="0 0 94 550" preserveAspectRatio="none">
          <path d="M0 0h94v60Q40 76 0 92z" fill="#b4cef0" fillOpacity=".5" />
          <path d="M94 70Q40 90 0 115v435h94z" fill="#6f9ad0" fillOpacity=".2" />
          <path d="M94 70Q40 90 0 115" stroke="#a9c5e9" fill="none" />
        </Swoosh>
        <Page>
          <Line $ls={0.2}>Словесная форма:</Line>
          <Line $indent>1. Задать два числа<Wavy> А</Wavy> и В</Line>
          <Line $indent $ls={0.06}>2. Найти сумму этих чисел S<Wavy>=A</Wavy>+B</Line>
          <Line $ls={0.27}>Графическая форма:</Line>
          <FlowDiagram />
          <Speck $x={575} />
          <Speck $x={642} />
        </Page>
      </Canvas>
      <ScrollBar>
        <svg width="9" height="10" viewBox="0 0 9 10"><path d="M0 8h9L4.500 3.500z" fill="#36538a" /></svg>
        <ScrollThumb><i /><i /><i /><i /></ScrollThumb>
        <svg width="9" height="11" viewBox="0 0 9 11"><path d="M0 2h9L4.500 6.500z" fill="#36538a" /></svg>
        <BrowseButtons>
          <svg width="9" height="48" viewBox="0 0 9 48">
            <path d="M1.500 9h6l-3-3zM1.500 12.500h6l-3-3zM1.500 37h6l-3 3zM1.500 40.500h6l-3 3zM2 9h5v1H2zM2 36h5v1H2z" fill="#111" />
            <circle cx="4.500" cy="23.500" r="3" fill="#c3c9d4" stroke="#222" />
          </svg>
        </BrowseButtons>
      </ScrollBar>
    </Workspace>

    <StatusBar>
      <StatusCell $w={105} $pl={8}>Страница: 2 из 8</StatusCell>
      <StatusCell $w={101}>Число слов: 929</StatusCell>
      <StatusCell $w={147}><ProofIcon />русский</StatusCell>
      <StatusRight>
        <ViewButtons>
          {viewPaths.map((p, i) => (
            <ViewButton key={p} $on={i === 0}><ViewIcon index={i} /></ViewButton>
          ))}
        </ViewButtons>
        <ZoomText>100%</ZoomText>
        <ZoomSlider />
      </StatusRight>
    </StatusBar>

    <TaskBar>
      <StartButton><FlagIcon />Пуск</StartButton>
      <TaskButton $ls={-0.1}><ComputerIcon />Мой компьютер</TaskButton>
      <TaskButton><FolderIcon />UDISK (E:)</TaskButton>
      <TaskButton $active><WordIcon />Урок - Программиро...</TaskButton>
      <TrayArea>
        <LangBox $w={12} $bg="#0a246a" $size={10} $ls={-0.8}>RU</LangBox>
        <Tray>
          <b>«</b>
          <NetworkIcon />
          <SafeRemoveIcon />
          <LangBox $w={16} $bg="#000080" $size={12}>Ru</LangBox>
          <time>16:22</time>
        </Tray>
      </TrayArea>
    </TaskBar>

    <Orb><OfficeOrb /></Orb>
  </Window>
);

export default App;
